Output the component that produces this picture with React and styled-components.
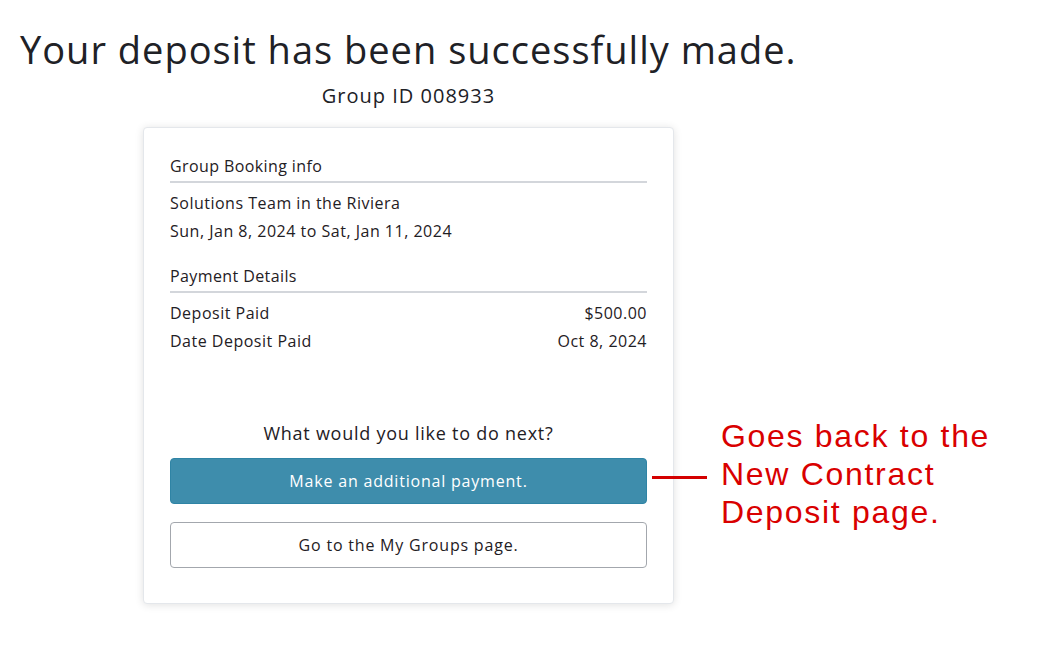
import React from "react";
import styled, { createGlobalStyle } from "styled-components";

const GlobalStyle = createGlobalStyle`
  body {
    margin: 0;
    background: #ffffff;
    font-family: "Open Sans", "Liberation Sans", sans-serif;
    color: #1f2024;
  }
`;

const Page = styled.div`
  width: 1047px;
  height: 655px;
  padding: 26px 0 0 20px;
  box-sizing: border-box;
`;

const Title = styled.h1`
  margin: 0;
  font-size: 38px;
  font-weight: 400;
  line-height: 46px;
  letter-spacing: 1px;
  color: #202126;
`;

const Column = styled.div`
  width: 531px;
  margin-left: 123px;
  display: flex;
  flex-direction: column;
  align-items: stretch;
`;

const GroupId = styled.div`
  text-align: center;
  font-size: 20px;
  line-height: 26px;
  letter-spacing: 1px;
  margin-top: 11px;
  color: #202126;
`;

const Card = styled.div`
  margin-top: 18px;
  background: #fff;
  border: 1px solid #e4e7eb;
  border-radius: 4px;
  box-shadow: 0 1px 8px rgba(0, 0, 0, 0.12);
  padding: 26px 26px 35px 26px;
  display: flex;
  flex-direction: column;
`;

const SectionTitle = styled.div`
  font-size: 16px;
  letter-spacing: 0.4px;
  line-height: 24px;
  padding-bottom: 3px;
  border-bottom: 2px solid #d3d6db;
  margin-top: ${(p) => p.$top || 0}px;
`;

const Lines = styled.div`
  display: flex;
  flex-direction: column;
  padding-top: 6px;
`;

const InfoLine = styled.div`
  display: flex;
  justify-content: space-between;
  font-size: 16px;
  letter-spacing: 0.5px;
  line-height: 28px;
`;

const Question = styled.div`
  margin-top: 65px;
  text-align: center;
  font-size: 18px;
  letter-spacing: 0.75px;
  line-height: 26px;
`;

const ButtonWrap = styled.div`
  position: relative;
  margin-top: ${(p) => p.$top}px;
`;

const Button = styled.button`
  width: 100%;
  height: 46px;
  border-radius: 4px;
  font-family: inherit;
  font-size: 16px;
  letter-spacing: 0.8px;
  cursor: pointer;
  border: 1px solid ${(p) => (p.$primary ? "#2f84a5" : "#a3a7ad")};
  background: ${(p) => (p.$primary ? "#3e8dac" : "#ffffff")};
  color: ${(p) => (p.$primary ? "#ffffff" : "#1f2024")};
`;

const Callout = styled.div`
  position: absolute;
  left: calc(100% + 5px);
  top: -41px;
  display: flex;
  align-items: flex-start;
  gap: 14px;
  width: 340px;
`;

const Leader = styled.div`
  width: 55px;
  height: 3px;
  flex-shrink: 0;
  background: #d40000;
  margin-top: 59px;
`;

const CalloutText = styled.div`
  color: #d90000;
  font-family: "Liberation Sans", Arial, sans-serif;
  font-size: 32px;
  letter-spacing: 1.7px;
  line-height: 38px;
  white-space: nowrap;
`;

export default function App() {
  return (
    <>
      <GlobalStyle />
      <Page>
        <Title>Your deposit has been successfully made.</Title>
        <Column>
          <GroupId>Group ID 008933</GroupId>
          <Card>
            <SectionTitle>Group Booking info</SectionTitle>
            <Lines>
              <InfoLine>Solutions Team in the Riviera</InfoLine>
              <InfoLine>Sun, Jan 8, 2024 to Sat, Jan 11, 2024</InfoLine>
            </Lines>
            <SectionTitle $top={19}>Payment Details</SectionTitle>
            <Lines>
              <InfoLine>
                <span>Deposit Paid</span>
                <span>$500.00</span>
              </InfoLine>
              <InfoLine>
                <span>Date Deposit Paid</span>
                <span>Oct 8, 2024</span>
              </InfoLine>
            </Lines>
            <Question>What would you like to do next?</Question>
            <ButtonWrap $top={12}>
              <Button $primary>Make an additional payment.</Button>
              <Callout>
                <Leader />
                <CalloutText>
                  Goes back to the
                  <br />
                  New Contract
                  <br />
                  Deposit page.
                </CalloutText>
              </Callout>
            </ButtonWrap>
            <ButtonWrap $top={18}>
              <Button>Go to the My Groups page.</Button>
            </ButtonWrap>
          </Card>
        </Column>
      </Page>
    </>
  );
}
